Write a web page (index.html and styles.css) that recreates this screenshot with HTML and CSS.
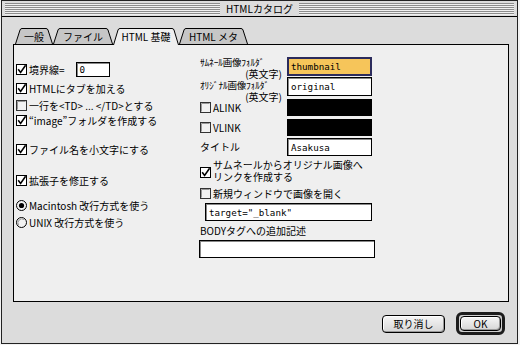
FILE: index.html
```html
<!DOCTYPE html>
<html lang="ja">
<head>
<meta charset="utf-8">
<title>HTMLカタログ</title>
<link rel="stylesheet" href="styles.css">
</head>
<body>
<div class="window">
  <div class="titlebar">
    <div class="stripes"></div>
    <span class="title">HTMLカタログ</span>
    <div class="stripes"></div>
  </div>

  <div class="tabs">
    <div class="tab" style="width:38px">
      <svg width="38" height="16" viewBox="0 0 38 16"><path d="M0.5 16 L5 2 Q5.5 0.5 7 0.5 H31 Q32.5 0.5 33 2 L37.5 16" fill="#c6c6c6" stroke="#000"/></svg>
      <span>一般</span>
    </div>
    <div class="tab" style="width:60px">
      <svg width="60" height="16" viewBox="0 0 60 16"><path d="M0.5 16 L5 2 Q5.5 0.5 7 0.5 H53 Q54.5 0.5 55 2 L59.5 16" fill="#c6c6c6" stroke="#000"/></svg>
      <span>ファイル</span>
    </div>
    <div class="tab sel" style="width:66px">
      <svg width="66" height="17" viewBox="0 0 66 17"><path d="M0.5 17 L5 2 Q5.5 0.5 7 0.5 H59 Q60.5 0.5 61 2 L65.5 17" fill="#efefef" stroke="#000"/></svg>
      <span>HTML 基礎</span>
    </div>
    <div class="tab" style="width:69px">
      <svg width="69" height="16" viewBox="0 0 69 16"><path d="M0.5 16 L5 2 Q5.5 0.5 7 0.5 H62 Q63.5 0.5 64 2 L68.5 16" fill="#c6c6c6" stroke="#000"/></svg>
      <span>HTML メタ</span>
    </div>
  </div>

  <div class="panel">
    <div class="left">
      <div class="row r1">
        <svg class="cb" width="11" height="11" viewBox="0 0 11 11"><rect x=".5" y=".5" width="10" height="10" fill="#fff" stroke="#000"/><path d="M2.2 5.2 L4.6 8.4 L9.6 1.2" fill="none" stroke="#000" stroke-width="1.6"/></svg>
        <span>境界線=</span>
        <div class="field small">0</div>
      </div>
      <div class="row r2">
        <svg class="cb" width="11" height="11" viewBox="0 0 11 11"><rect x=".5" y=".5" width="10" height="10" fill="#fff" stroke="#000"/><path d="M2.2 5.2 L4.6 8.4 L9.6 1.2" fill="none" stroke="#000" stroke-width="1.6"/></svg>
        <span>HTMLにタブを加える</span>
      </div>
      <div class="row r3">
        <svg class="cb" width="11" height="11" viewBox="0 0 11 11"><rect x=".5" y=".5" width="10" height="10" fill="#f2f2f2" stroke="#333"/><path d="M1.5 9.5 V1.5 H9.5" fill="none" stroke="#999"/></svg>
        <span>一行を&lt;TD&gt; ... &lt;/TD&gt;とする</span>
      </div>
      <div class="row r4">
        <svg class="cb" width="11" height="11" viewBox="0 0 11 11"><rect x=".5" y=".5" width="10" height="10" fill="#fff" stroke="#000"/><path d="M2.2 5.2 L4.6 8.4 L9.6 1.2" fill="none" stroke="#000" stroke-width="1.6"/></svg>
        <span>“image”フォルダを作成する</span>
      </div>
      <div class="row r5">
        <svg class="cb" width="11" height="11" viewBox="0 0 11 11"><rect x=".5" y=".5" width="10" height="10" fill="#fff" stroke="#000"/><path d="M2.2 5.2 L4.6 8.4 L9.6 1.2" fill="none" stroke="#000" stroke-width="1.6"/></svg>
        <span>ファイル名を小文字にする</span>
      </div>
      <div class="row r6">
        <svg class="cb" width="11" height="11" viewBox="0 0 11 11"><rect x=".5" y=".5" width="10" height="10" fill="#fff" stroke="#000"/><path d="M2.2 5.2 L4.6 8.4 L9.6 1.2" fill="none" stroke="#000" stroke-width="1.6"/></svg>
        <span>拡張子を修正する</span>
      </div>
      <div class="row r7">
        <svg class="cb" width="11" height="11" viewBox="0 0 11 11"><circle cx="5.5" cy="5.5" r="5" fill="#f2f2f2" stroke="#000"/><circle cx="5.5" cy="5.5" r="2.6" fill="#000"/></svg>
        <span>Macintosh 改行方式を使う</span>
      </div>
      <div class="row r8">
        <svg class="cb" width="11" height="11" viewBox="0 0 11 11"><circle cx="5.5" cy="5.5" r="5" fill="#f2f2f2" stroke="#000"/><path d="M2.5 8 A4 4 0 0 1 8 2.5" fill="none" stroke="#999"/></svg>
        <span>UNIX 改行方式を使う</span>
      </div>
    </div>

    <div class="right">
      <div class="frow fa">
        <div class="flabel"><div class="l1">ｻﾑﾈｰﾙ画像ﾌｫﾙﾀﾞ</div><div class="l2">(英文字)</div></div>
        <div class="field focus">thumbnail</div>
      </div>
      <div class="frow fb">
        <div class="flabel down"><div class="l1">ｵﾘｼﾞﾅﾙ画像ﾌｫﾙﾀﾞ</div><div class="l2">(英文字)</div></div>
        <div class="field">original</div>
      </div>
      <div class="frow color c1">
        <div class="flabel inline">
          <svg class="cb" width="11" height="11" viewBox="0 0 11 11"><rect x=".5" y=".5" width="10" height="10" fill="#f2f2f2" stroke="#333"/><path d="M1.5 9.5 V1.5 H9.5" fill="none" stroke="#999"/></svg>
          <span>ALINK</span>
        </div>
        <div class="swatch"></div>
      </div>
      <div class="frow color c2">
        <div class="flabel inline">
          <svg class="cb" width="11" height="11" viewBox="0 0 11 11"><rect x=".5" y=".5" width="10" height="10" fill="#f2f2f2" stroke="#333"/><path d="M1.5 9.5 V1.5 H9.5" fill="none" stroke="#999"/></svg>
          <span>VLINK</span>
        </div>
        <div class="swatch"></div>
      </div>
      <div class="frow ftitle">
        <div class="flabel inline"><span>タイトル</span></div>
        <div class="field">Asakusa</div>
      </div>
      <div class="row two">
        <svg class="cb" width="11" height="11" viewBox="0 0 11 11"><rect x=".5" y=".5" width="10" height="10" fill="#fff" stroke="#000"/><path d="M2.2 5.2 L4.6 8.4 L9.6 1.2" fill="none" stroke="#000" stroke-width="1.6"/></svg>
        <span>サムネールからオリジナル画像へ<br>リンクを作成する</span>
      </div>
      <div class="row newwin">
        <svg class="cb" width="11" height="11" viewBox="0 0 11 11"><rect x=".5" y=".5" width="10" height="10" fill="#f2f2f2" stroke="#333"/><path d="M1.5 9.5 V1.5 H9.5" fill="none" stroke="#999"/></svg>
        <span>新規ウィンドウで画像を開く</span>
      </div>
      <div class="field target">target="_blank"</div>
      <div class="bodylabel">BODYタグへの追加記述</div>
      <div class="field bodyfield"></div>
    </div>
  </div>

  <div class="buttons">
    <div class="btn cancel">取り消し</div>
    <div class="default"><div class="btn ok">OK</div></div>
  </div>
</div>
</body>
</html>
```

FILE: styles.css
```css
* { box-sizing: border-box; }
html, body { margin: 0; padding: 0; background: #f2f2f2; }
body {
  width: 520px; height: 345px; overflow: hidden;
  font-family: "Noto Sans CJK JP", "Noto Sans", sans-serif;
  font-size: 10px; color: #000;
}
.window {
  margin-left: 1px; width: 517px; height: 344px;
  border: 1px solid #222; background: #dcdcdc;
  display: flex; flex-direction: column;
}
.titlebar {
  height: 16px; border-bottom: 1px solid #000;
  display: flex; align-items: center; gap: 6px; padding: 0 3px;
}
.stripes {
  flex: 1; height: 12px;
  background: repeating-linear-gradient(to bottom, #8c8c8c 0 1px, #f0f0f0 1px 2px);
}
.title { line-height: 15px; }

.tabs { display: flex; margin: 11px 0 0 13px; height: 16px; position: relative; z-index: 1; }
.tab { position: relative; height: 16px; display: flex; align-items: flex-start; justify-content: center; line-height: 16px; padding-top: 1px; }
.tab.sel { height: 17px; }
.tab svg { position: absolute; left: 0; top: 0; }
.tab span { position: relative; }

.panel {
  margin-left: 11px; width: 496px; height: 258px;
  border: 1px solid #000; background: #efefef; display: flex;
}
.left { width: 186px; padding: 16px 0 0 2px; display: flex; flex-direction: column; }
.row { display: flex; align-items: center; gap: 2px; height: 16px; white-space: nowrap; }
.cb { flex: none; }
.r1 { height: 17px; }
.r2 { margin-top: 2px; }
.r3 { margin-top: 1px; }
.r4 { margin-top: -1px; }
.r5 { margin-top: 13px; }
.r6 { margin-top: 15px; }
.r7 { margin-top: 9px; }
.r8 { margin-top: 1px; }

.field {
  border: 1px solid #000; background: #fff;
  box-shadow: inset 1px 1px 0 #888;
  font-family: "DejaVu Sans Mono", monospace; font-size: 9.2px;
  padding-left: 3px; display: flex; align-items: center;
  width: 85px; height: 19px; white-space: nowrap;
}
.field.small { width: 34px; height: 15px; margin-left: 9px; }
.field.focus { border: 2px solid #2b2b5c; background: #f6c55a; box-shadow: none; padding-left: 2px; }

.right { padding-top: 12px; display: flex; flex-direction: column; }
.frow { display: flex; height: 19px; }
.flabel { width: 87px; line-height: 11px; white-space: nowrap; }
.flabel .l1 { font-size: 9.5px; letter-spacing: -0.2px; }
.flabel .l2 { text-align: right; padding-right: 5px; }
.flabel.down { padding-top: 3px; }
.flabel.inline { display: flex; align-items: center; gap: 2px; line-height: 16px; }
.fb { margin-top: 1px; }
.color { height: 17px; margin-top: 3px; }
.swatch { width: 85px; height: 17px; background: #000; }
.ftitle { height: 18px; margin-top: 2px; }
.ftitle .field { height: 18px; }
.two { height: 26px; margin-top: 1px; align-items: flex-end; }
.two span { line-height: 12px; }
.two .cb { margin-bottom: 5px; }
.newwin { margin-top: 2px; }
.field.target { margin: 2px 0 0 5px; width: 167px; height: 18px; }
.bodylabel { margin-top: 2px; height: 16px; line-height: 16px; }
.field.bodyfield { margin: 1px 0 0 -1px; width: 176px; height: 18px; }

.buttons {
  display: flex; justify-content: flex-end; align-items: center;
  gap: 11px; padding-right: 12px; margin-top: 10px; height: 23px;
}
.btn {
  border: 1px solid #000; border-radius: 4px;
  background: linear-gradient(#f6f6f6, #d6d6d6);
  box-shadow: inset 1px 1px 0 #fff, inset -1px -1px 0 #999;
  display: flex; align-items: center; justify-content: center;
}
.cancel { width: 63px; height: 18px; }
.default {
  width: 49px; height: 23px; border: 3px solid #1c1c1c; border-radius: 6px;
  padding: 1px; background: #cfcfcf; display: flex;
}
.ok { flex: 1; }
```
